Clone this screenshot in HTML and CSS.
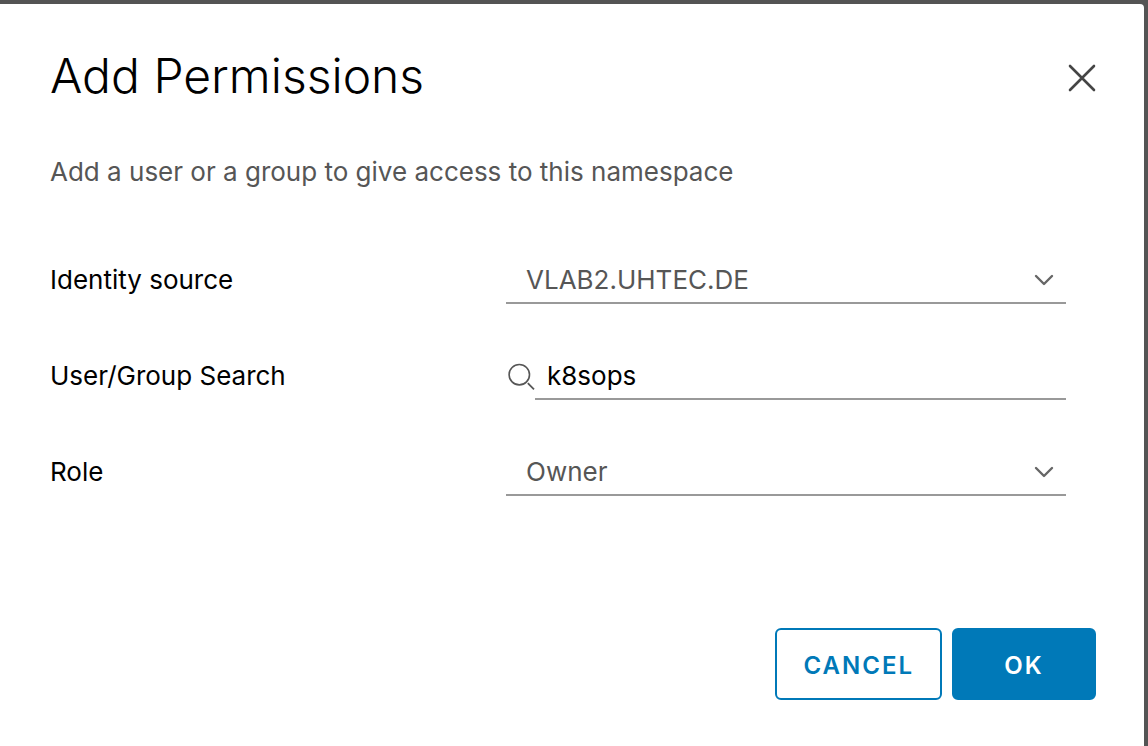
FILE: index.html
```
<!DOCTYPE html>
<html lang="en">
<head>
<meta charset="utf-8">
<meta name="viewport" content="width=device-width, initial-scale=1">
<title>Add Permissions</title>
<link rel="stylesheet" href="styles.css">
</head>
<body>
<main class="dialog" role="dialog" aria-labelledby="dialog-title">
  <header class="dialog-header">
    <h1 class="dialog-title" id="dialog-title">Add Permissions</h1>
    <button class="close" type="button" aria-label="Close">
      <svg viewBox="0 0 32 32" width="32" height="32" fill="none" stroke="#454545" stroke-width="2.6" stroke-linecap="round"><path d="M4 4 28 28M28 4 4 28"/></svg>
    </button>
  </header>
  <p class="intro">Add a user or a group to give access to this namespace</p>
  <form class="form">
    <div class="fields">
      <label class="label" for="source">Identity source</label>
      <div class="select-wrap">
        <select class="control select" id="source"><option>VLAB2.UHTEC.DE</option></select>
        <svg class="chevron" viewBox="0 0 20 12" width="20" height="12"><path d="M2 2 10 10 18 2"/></svg>
      </div>
      <label class="label" for="search">User/Group Search</label>
      <div class="search">
        <svg class="search-icon" viewBox="0 0 29 32" width="29" height="32"><circle cx="13.300" cy="14.700" r="10.200"/><path d="M21.800 23.200 28 29.300" stroke-width="1.800"/></svg>
        <input class="control input" id="search" type="text" value="k8sops">
      </div>
      <label class="label" for="role">Role</label>
      <div class="select-wrap">
        <select class="control select" id="role"><option>Owner</option></select>
        <svg class="chevron" viewBox="0 0 20 12" width="20" height="12"><path d="M2 2 10 10 18 2"/></svg>
      </div>
    </div>
    <div class="actions">
      <button class="button" type="button">CANCEL</button>
      <button class="button button-primary" type="button">OK</button>
    </div>
  </form>
</main>
</body>
</html>
```

FILE: styles.css
```
* {
  box-sizing: border-box;
}

body {
  margin: 0;
  padding: 4px 4px 0 0;
  min-height: 100vh;
  display: flex;
  background: #545454;
  color: #000;
  font-family: Metropolis, Inter, sans-serif;
  font-size: 26px;
  line-height: 32px;
}

.dialog {
  flex: 1;
  padding: 40px 48px 46px 50px;
  background: #fff;
  border-top-right-radius: 4px;
}

.dialog-header {
  display: flex;
  align-items: center;
  justify-content: space-between;
}

.dialog-title {
  margin: 0;
  font-size: 48px;
  font-weight: 350;
  line-height: 64px;
}

.close {
  display: flex;
  margin: 4px -2px 0 0;
  padding: 0;
  border: 0;
  background: none;
}

.intro {
  margin: 48px 0 0;
  color: #565656;
}

.fields {
  display: grid;
  grid-template-columns: 57fr 70fr;
  row-gap: 48px;
  padding: 68px 30px 0 0;
}

.label {
  line-height: 48px;
}

.select-wrap {
  position: relative;
}

.control {
  display: block;
  width: 100%;
  height: 48px;
  margin: 0;
  border: 0;
  border-bottom: 2px solid #999;
  border-radius: 0;
  outline: 0;
  background: none;
  color: #000;
  font: inherit;
}

.select {
  padding: 2px 48px 0 20px;
  appearance: none;
  color: #565656;
}

.chevron {
  position: absolute;
  top: 18px;
  right: 12px;
  fill: none;
  stroke: #666;
  stroke-width: 2.4;
  stroke-linecap: round;
  stroke-linejoin: round;
  pointer-events: none;
}

.search {
  display: flex;
  align-items: center;
}

.search-icon {
  flex: none;
  fill: none;
  stroke: #565656;
  stroke-width: 1.6;
}

.input {
  flex: 1;
  min-width: 0;
  padding: 0 12px;
}

.actions {
  display: flex;
  justify-content: flex-end;
  gap: 10px;
  margin-top: 132px;
}

.button {
  min-width: 144px;
  height: 72px;
  padding: 4px 26px 0;
  border: 2px solid #0079b8;
  border-radius: 6px;
  background: #fff;
  color: #0079b8;
  font: inherit;
  font-size: 24px;
  font-weight: 600;
  letter-spacing: 2px;
}

.button-primary {
  background: #0079b8;
  color: #fff;
}
```
